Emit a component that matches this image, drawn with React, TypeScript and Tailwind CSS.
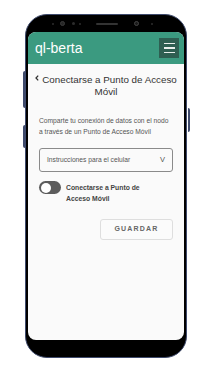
import React, { useState } from 'react';

const Dot = ({ className }: { className: string }) => <span className={`block rounded-full ${className}`} />;

export default function App() {
    const [enabled, setEnabled] = useState(false);

    return (
        <div className="w-[204px] h-[375px] bg-white pt-[14px] pl-[25px] font-['Liberation_Sans',Arial,sans-serif]">
            <div className="relative w-[162px] h-[344px] rounded-[22px] bg-black border border-[#3e4a6c] flex flex-col px-[2px]">
                {/* side buttons */}
                <span className="absolute left-[-3px] top-[56px] w-[2px] h-[37px] bg-[#3e4a6c] rounded-l" />
                <span className="absolute left-[-3px] top-[110px] w-[2px] h-[23px] bg-[#3e4a6c] rounded-l" />
                <span className="absolute right-[-4px] top-[93px] w-[2px] h-[24px] bg-[#3e4a6c] rounded-r" />

                {/* top bezel */}
                <div className="h-[17px] flex items-center pl-[24px]">
                    <Dot className="w-[2px] h-[2px] bg-[#2c2c2c]" />
                    <Dot className="ml-[6px] w-[5px] h-[5px] bg-[#262626] border border-[#3a3a3a]" />
                    <Dot className="ml-[7px] w-[3px] h-[3px] bg-[#2c2c2c]" />
                    <Dot className="ml-[4px] w-[2px] h-[2px] bg-[#2c2c2c]" />
                    <span className="ml-[15px] w-[22px] h-[2px] rounded-full bg-[#333]" />
                    <Dot className="ml-[16px] w-[5px] h-[5px] bg-[#1a1a1a] border border-[#444]" />
                    <Dot className="ml-[12px] w-[2px] h-[2px] bg-[#2c2c2c]" />
                </div>

                {/* screen */}
                <div className="flex-1 rounded-[8px] bg-[#fafafa] overflow-hidden flex flex-col">
                    <div className="h-[32px] shrink-0 bg-[#3b9a80] flex items-center justify-between pl-[7px] pr-[5px]">
                        <span className="text-white text-[14px] leading-none">ql-berta</span>
                        <button className="w-[20px] h-[20px] bg-[#2e5f52] flex flex-col items-center justify-center gap-[3px]">
                            <span className="block w-[11px] h-[1.5px] bg-[#e8efec]" />
                            <span className="block w-[11px] h-[1.5px] bg-[#e8efec]" />
                            <span className="block w-[11px] h-[1.5px] bg-[#e8efec]" />
                        </button>
                    </div>

                    <div className="px-[11px] flex flex-col">
                        <h1 className="mt-[10px] -mx-[6px] text-center text-[9.8px] leading-[12px] text-[#333]">
                            <svg width="4" height="6" viewBox="0 0 4 6" className="inline-block align-[2px] mr-[3px]">
                                <path d="M3.2 0.6 L1 3 L3.2 5.4" fill="none" stroke="#333" strokeWidth="1.3" />
                            </svg>
                            Conectarse a Punto de Acceso Móvil
                        </h1>

                        <p className="mt-[17px] text-[6.7px] leading-[11px] text-[#555]">
                            Comparte tu conexión de datos con el nodo a través de un Punto de Acceso Móvil
                        </p>

                        <div className="mt-[11px] h-[24px] rounded-[3px] border border-[#8a8a8a] flex items-center justify-between px-[7px] text-[6.7px] text-[#555]">
                            <span>Instrucciones para el celular</span>
                            <span className="text-[7.5px]">V</span>
                        </div>

                        <div className="mt-[9px] flex items-start gap-[5px]">
                            <button
                                onClick={() => setEnabled(!enabled)}
                                className="w-[22px] h-[13px] rounded-full bg-[#5c5c5c] p-[1.5px] flex items-center shrink-0"
                            >
                                <span className="block w-[10px] h-[10px] rounded-full bg-white" />
                            </button>
                            <span className="mt-[1px] text-[6.8px] leading-[11px] font-bold text-[#444]">
                                Conectarse a Punto de<br />Acceso Móvil
                            </span>
                        </div>

                        <button className="mt-[15px] self-end w-[73px] h-[21px] rounded-[3px] border border-[#dedede] bg-[#fbfbfb] text-[7px] font-bold tracking-[1.2px] text-[#666]">
                            GUARDAR
                        </button>
                    </div>
                </div>

                {/* bottom bezel */}
                <div className="h-[17px]" />
            </div>
        </div>
    );
}
